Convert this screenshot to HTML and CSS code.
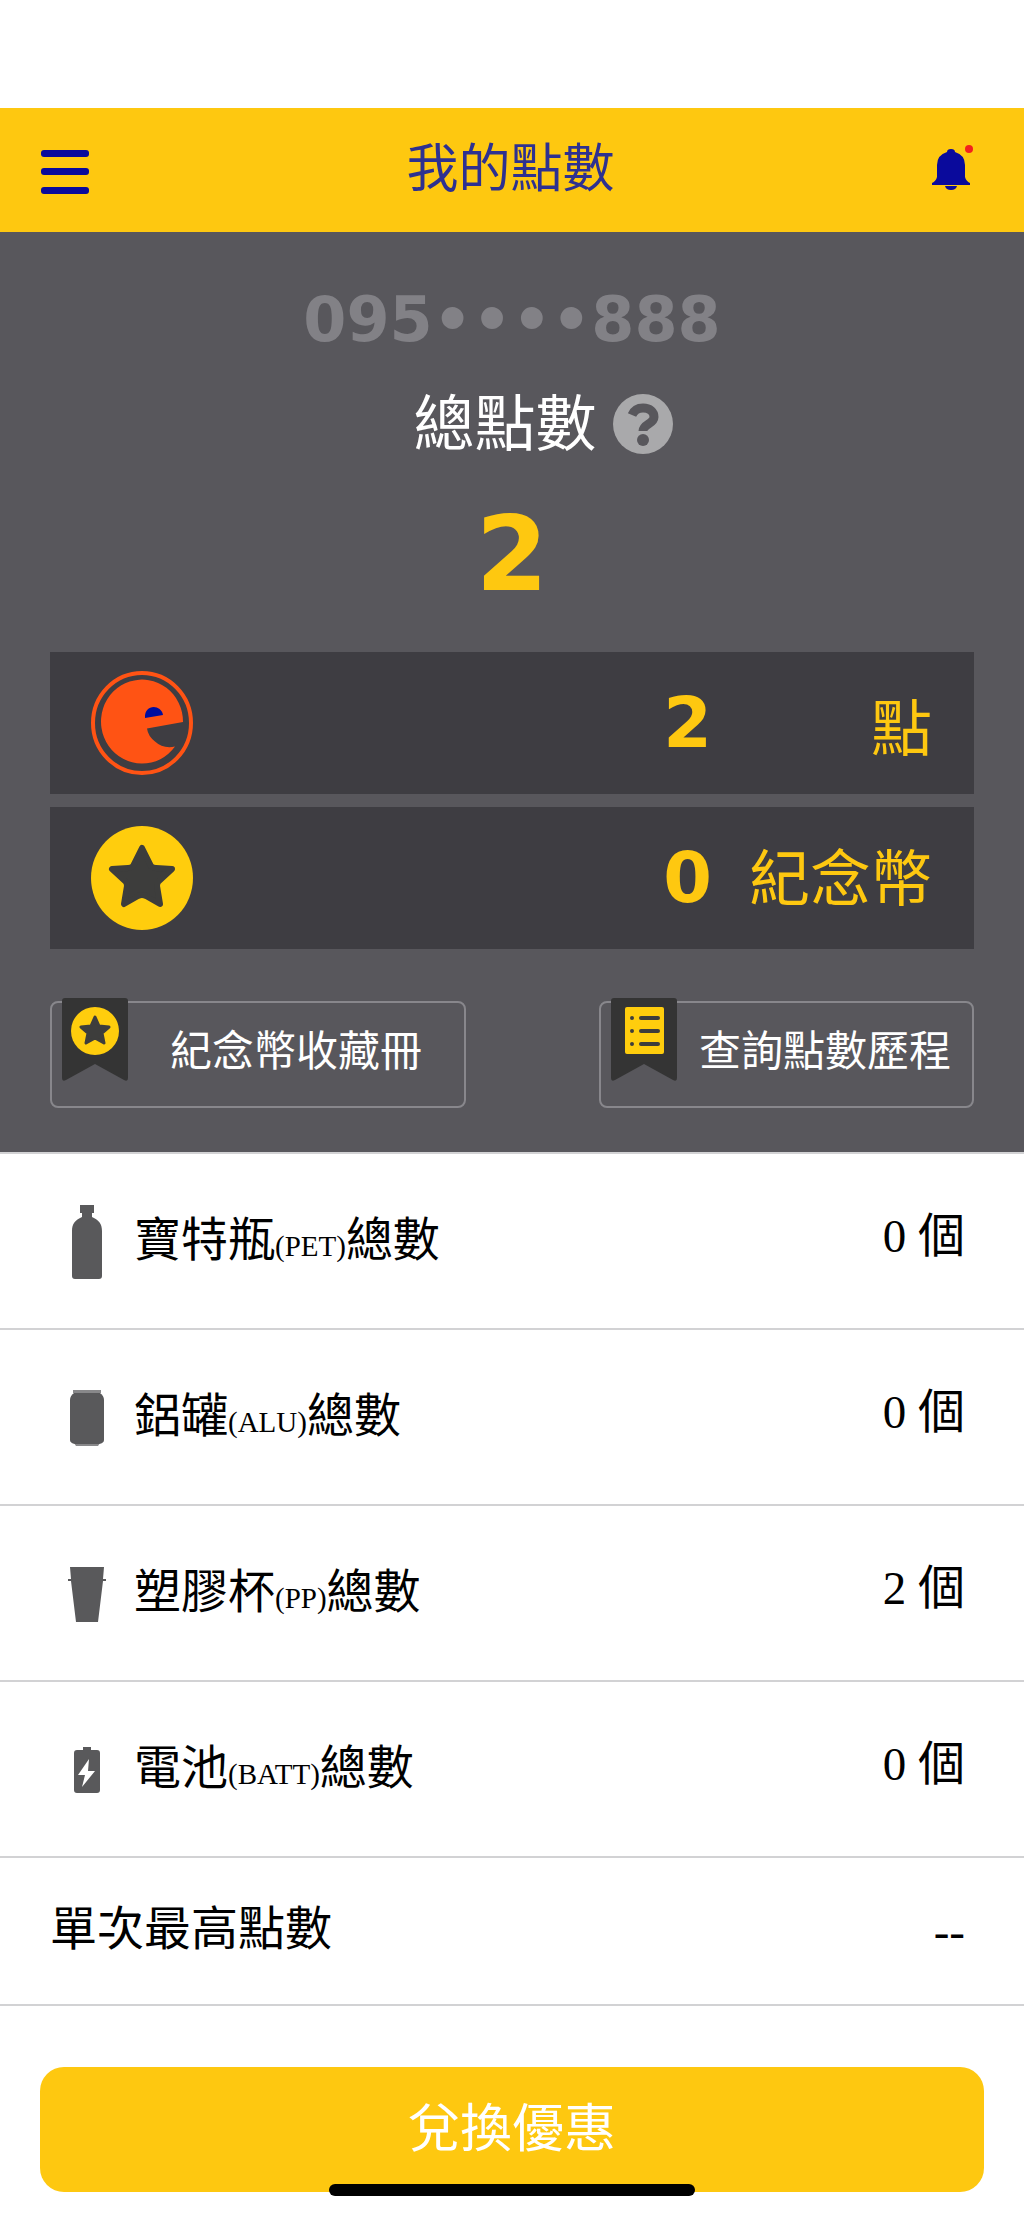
FILE: index.html
```html
<!DOCTYPE html>
<html lang="zh-Hant">
<head>
<meta charset="utf-8">
<meta name="viewport" content="width=device-width, initial-scale=1">
<title>我的點數</title>
<link rel="stylesheet" href="styles.css">
</head>
<body>
<header class="topbar">
  <button class="icon-button menu" type="button" aria-label="選單">
    <svg width="48" height="44" viewBox="0 0 48 44" fill="#0a0a9c"><rect width="48" height="7" rx="3"/><rect y="18" width="48" height="7" rx="3"/><rect y="37" width="48" height="7" rx="3"/></svg>
  </button>
  <h1 class="topbar-title">我的點數</h1>
  <button class="icon-button bell" type="button" aria-label="通知">
    <svg width="42" height="46" viewBox="0 0 42 46"><path fill="#0a0a9c" d="M15 7q0-3 4-3t4 3q10 3 10 13v12q1 4 5 6v2H0v-2q4-2 5-6V20Q5 10 15 7zM13 41h12q-1 4-6 4t-6-4z"/><circle cx="37" cy="4" r="4" fill="#f3211d"/></svg>
  </button>
</header>
<main>
  <section class="hero">
    <p class="phone">095••••888</p>
    <div class="total">
      <h2 class="total-label">總點數</h2>
      <button class="icon-button" type="button" aria-label="說明">
        <svg width="60" height="60" viewBox="0 0 60 60"><circle cx="30" cy="30" r="30" fill="#a9a9ab"/><path d="M19 21q3-7 11-7c7 0 11 4 11 9 0 7-11 7-11 14" fill="none" stroke="#58575c" stroke-width="9"/><circle cx="30" cy="46" r="6" fill="#58575c"/></svg>
      </button>
    </div>
    <p class="total-value">2</p>
    <div class="cards">
      <div class="card">
        <svg width="102" height="104" viewBox="0 0 102 104"><ellipse cx="51" cy="52" rx="49" ry="50" fill="none" stroke="#ff5314" stroke-width="4"/><path fill="#ff5314" d="M92 51A41 42 0 1 0 84 75.500Q72 78 64 70.500Q57 65 56 57.500Z"/><path fill="#000da0" d="M54 47C53 33 70 33 72 44Z"/></svg>
        <span class="card-value">2</span>
        <span class="card-unit card-unit-points">點</span>
      </div>
      <div class="card">
        <svg width="102" height="104" viewBox="0 0 102 104"><ellipse cx="51" cy="52" rx="51" ry="52" fill="#ffcd0d"/><path fill="#3d3d3c" stroke="#3d3d3c" stroke-width="6" stroke-linejoin="round" d="M51 22L60 40Q62 42 65 42L81 43L68 55Q66 57 66 60L69 78L55 70Q51 68 47 70L33 78L36 60Q36 57 34 55L21 43L37 42Q40 42 42 40Z"/></svg>
        <span class="card-value">0</span>
        <span class="card-unit">紀念幣</span>
      </div>
    </div>
    <div class="links">
      <button class="link-button link-collection" type="button">
        <svg class="ribbon" width="66" height="83" viewBox="0 0 66 83"><path fill="#343434" d="M3 0h60q3 0 3 3v77q0 4-4 2L33 66 4 82q-4 2-4-2V3q0-3 3-3z"/><circle cx="33" cy="33" r="24" fill="#ffcd0d"/><path fill="#3d3d3c" stroke="#3d3d3c" stroke-width="3" stroke-linejoin="round" d="M33 19l4 9 10 1-7 6 2 10-9-5-9 5 2-10-7-6 10-1z"/></svg>
        紀念幣收藏冊
      </button>
      <button class="link-button link-history" type="button">
        <svg class="ribbon" width="66" height="83" viewBox="0 0 66 83"><path fill="#343434" d="M3 0h60q3 0 3 3v77q0 4-4 2L33 66 4 82q-4 2-4-2V3q0-3 3-3z"/><rect x="14" y="9" width="39" height="47" rx="2" fill="#ffcd0d"/><path d="M30 20h17M30 33h17M30 46h17M21 20h0M21 33h0M21 46h0" stroke="#3d3d3c" stroke-width="4" stroke-linecap="round"/></svg>
        查詢點數歷程
      </button>
    </div>
  </section>
  <ul class="stats">
    <li class="stat">
      <span class="stat-icon"><svg width="30" height="74" viewBox="0 0 30 74" fill="#59595b"><path d="M8 0h14v8h-2v4c7 3 10 7 10 14v45q0 3-3 3H3q-3 0-3-3V26c0-7 3-11 10-14V8H8z"/></svg></span>
      <span class="stat-label">寶特瓶<small>(PET)</small>總數</span>
      <span class="stat-value">0 個</span>
    </li>
    <li class="stat">
      <span class="stat-icon"><svg width="34" height="56" viewBox="0 0 34 56"><path fill="#88888a" d="M3 0h28v3H3zM4 53h26l-2 3H6z"/><path fill="#59595b" d="M4 3h26q4 3 4 7v40q0 3-5 4H5q-5-1-5-4V10q0-4 4-7z"/></svg></span>
      <span class="stat-label">鋁罐<small>(ALU)</small>總數</span>
      <span class="stat-value">0 個</span>
    </li>
    <li class="stat">
      <span class="stat-icon"><svg width="38" height="55" viewBox="0 0 38 55" fill="#59595b"><path d="M2 0h34l-1 12h3v2h-3l-5 41H8L3 14H0v-2h3z"/></svg></span>
      <span class="stat-label">塑膠杯<small>(PP)</small>總數</span>
      <span class="stat-value">2 個</span>
    </li>
    <li class="stat">
      <span class="stat-icon"><svg width="26" height="46" viewBox="0 0 26 46"><path fill="#59595b" d="M9 0h8v3h6q3 0 3 3v37q0 3-3 3H3q-3 0-3-3V6q0-3 3-3h6z"/><path fill="#fff" d="M15 12L4 28h7L8 40l13-16h-7z"/></svg></span>
      <span class="stat-label">電池<small>(BATT)</small>總數</span>
      <span class="stat-value">0 個</span>
    </li>
    <li class="stat stat-best">
      <span class="stat-label">單次最高點數</span>
      <span class="stat-value">--</span>
    </li>
  </ul>
</main>
<footer class="footer">
  <button class="redeem" type="button">兌換優惠</button>
  <span class="home-indicator"></span>
</footer>
</body>
</html>
```
FILE: styles.css
```css
* { box-sizing: border-box; }

body,
h1,
h2,
p,
ul {
  margin: 0;
  padding: 0;
}

body {
  padding-top: 108px;
  background: #fff;
  color: #000;
  font-family: "Liberation Serif", "Noto Sans CJK TC", sans-serif;
}

button {
  margin: 0;
  font-family: inherit;
  cursor: pointer;
}

svg {
  display: block;
  flex: none;
}

.icon-button {
  padding: 0;
  border: 0;
  background: none;
}

.topbar {
  display: flex;
  align-items: center;
  justify-content: space-between;
  height: 124px;
  padding: 0 50px 0 41px;
  background: #fec810;
}

.menu { padding-top: 4px; }

.bell { padding-bottom: 4px; }

.topbar-title {
  color: #2e3190;
  font-size: 52px;
  font-weight: 400;
  line-height: 60px;
}

.hero {
  padding: 58px 50px 44px;
  background: #58575c;
}

.phone {
  color: #828186;
  font: bold 62px/60px "DejaVu Sans", sans-serif;
  text-align: center;
}

.total {
  display: flex;
  align-items: center;
  justify-content: center;
  gap: 16px;
  margin-top: 44px;
  padding-left: 62px;
}

.total-label {
  padding-top: 4px;
  color: #fff;
  font-size: 61px;
  font-weight: 400;
  line-height: 56px;
}

.total-value {
  margin-top: 48px;
  color: #fec810;
  font: bold 104px/104px "DejaVu Sans", sans-serif;
  text-align: center;
}

.cards {
  display: grid;
  gap: 13px;
  margin-top: 46px;
}

.card {
  display: flex;
  align-items: center;
  height: 142px;
  padding: 0 42px 0 41px;
  background: #3e3d42;
  color: #fec810;
}

.card-value {
  margin-left: auto;
  font: bold 70px/70px "DejaVu Sans", sans-serif;
}

.card-unit {
  width: 220px;
  padding-top: 6px;
  font-size: 61px;
  line-height: 70px;
  text-align: right;
}

.card-unit-points { padding-top: 16px; }

.links {
  display: flex;
  justify-content: space-between;
  margin-top: 52px;
}

.link-button {
  position: relative;
  height: 107px;
  border: 2px solid #88878c;
  border-radius: 8px;
  background: none;
  color: #fff;
  font-size: 42px;
  line-height: 60px;
}

.link-collection { padding: 0 42px 6px 118px; }

.link-history { padding: 0 21px 6px 98px; }

.ribbon {
  position: absolute;
  top: -5px;
  left: 10px;
}

.stats {
  border-top: 2px solid #d2d2d4;
  list-style: none;
}

.stat {
  display: flex;
  align-items: center;
  height: 176px;
  padding: 0 59px 0 50px;
  border-bottom: 2px solid #d2d2d4;
  font-size: 47px;
  line-height: 60px;
}

.stat-icon {
  display: flex;
  justify-content: center;
  width: 74px;
  margin-right: 10px;
  padding-top: 2px;
}

.stat-label { padding-top: 4px; }

.stat-label small { font-size: 29px; }

.stat-value {
  margin-left: auto;
  padding-bottom: 10px;
}

.stat-best { height: 148px; }

.stat-best .stat-label { padding: 0 0 4px; }

.stat-best .stat-value { padding: 0; }

.footer {
  position: relative;
  padding: 61px 40px 24px;
}

.redeem {
  display: block;
  width: 100%;
  height: 125px;
  padding: 0 0 10px;
  border: 0;
  border-radius: 24px;
  background: #fec810;
  color: #fff;
  font-size: 52px;
}

.home-indicator {
  position: absolute;
  bottom: 20px;
  left: 50%;
  width: 366px;
  height: 12px;
  border-radius: 6px;
  background: #000;
  transform: translateX(-50%);
}
```
